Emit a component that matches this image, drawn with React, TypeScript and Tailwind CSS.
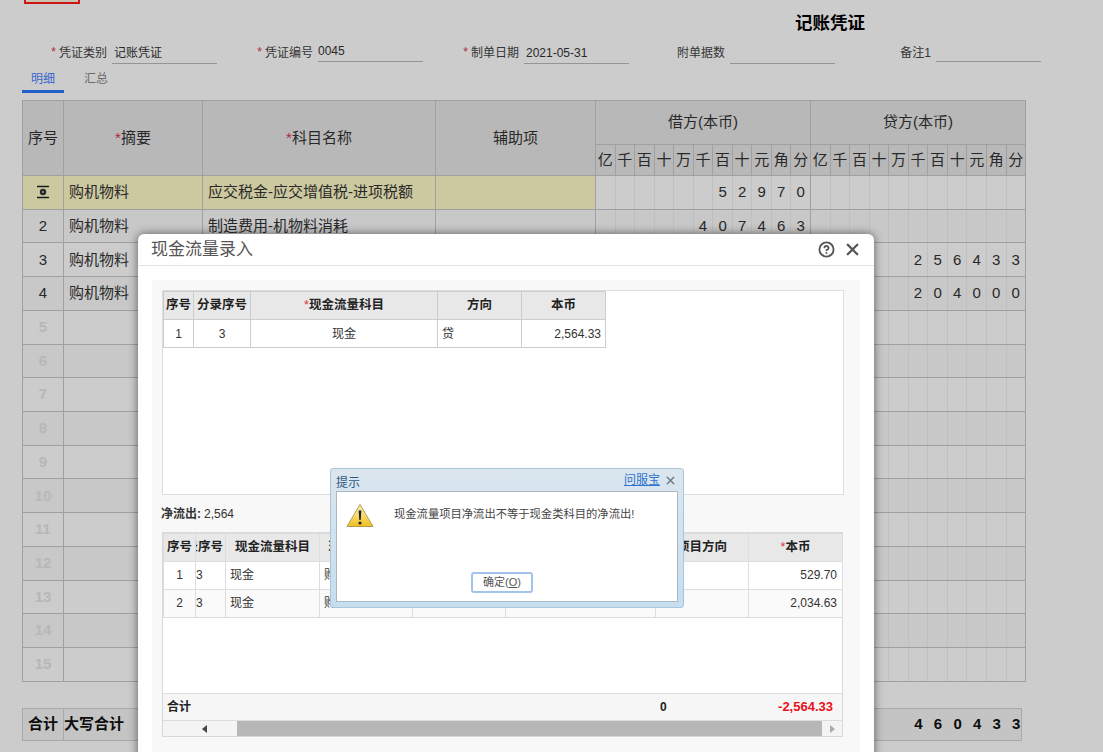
import { CircleHelp, X } from "lucide-react";

const units = ["亿", "千", "百", "十", "万", "千", "百", "十", "元", "角", "分"];

type Row = {
  no: string;
  summary: string;
  subject: string;
  debit: string;
  credit: string;
};

const rows: Row[] = [
  { no: "", summary: "购机物料", subject: "应交税金-应交增值税-进项税额", debit: "      52970", credit: "" },
  { no: "2", summary: "购机物料", subject: "制造费用-机物料消耗", debit: "     407463", credit: "" },
  { no: "3", summary: "购机物料", subject: "", debit: "", credit: "     256433" },
  { no: "4", summary: "购机物料", subject: "", debit: "", credit: "     204000" },
  ...[5, 6, 7, 8, 9, 10, 11, 12, 13, 14, 15].map((n) => ({
    no: String(n),
    summary: "",
    subject: "",
    debit: "",
    credit: "",
  })),
];

const cols = [41, 139, 233, 160];
const digitCols = Array.from({ length: 22 }, () => 19.55);

function DigitCells({ value }: { value: string }) {
  return (
    <>
      {units.map((_, i) => (
        <td
          key={i}
          className={`border-y border-y-[#c8c8c8] text-center text-[15px] text-[#333] ${
            i === 10 ? "border-r border-r-[#c8c8c8]" : "border-r border-r-[#efefef]"
          }`}
        >
          {value[i] && value[i] !== " " ? value[i] : ""}
        </td>
      ))}
    </>
  );
}

function RowMarker() {
  return (
    <svg width="14" height="14" viewBox="0 0 14 14" className="mx-auto">
      <path d="M1 1.5h12M1 12.5h12" stroke="#222" strokeWidth="1.6" />
      <circle cx="7" cy="7" r="3.2" fill="#333" />
      <circle cx="7" cy="7" r="1.1" fill="#bbb" />
    </svg>
  );
}

function VoucherTable() {
  const th = "border border-[#c8c8c8] bg-[#e7e7e7] font-normal text-[15px] text-[#333]";
  return (
    <table className="ml-[22px] w-[1003px] table-fixed border-collapse">
      <colgroup>
        {cols.map((w, i) => (
          <col key={i} style={{ width: w }} />
        ))}
        {digitCols.map((w, i) => (
          <col key={i} style={{ width: w }} />
        ))}
      </colgroup>
      <thead>
        <tr className="h-[44px]">
          <th rowSpan={2} className={th}>序号</th>
          <th rowSpan={2} className={th}>
            <span className="text-[#d8324a]">*</span>摘要
          </th>
          <th rowSpan={2} className={th}>
            <span className="text-[#d8324a]">*</span>科目名称
          </th>
          <th rowSpan={2} className={th}>辅助项</th>
          <th colSpan={11} className={th}>借方(本币)</th>
          <th colSpan={11} className={th}>贷方(本币)</th>
        </tr>
        <tr className="h-[31px]">
          {[...units, ...units].map((u, i) => (
            <th key={i} className={`${th} px-0`}>{u}</th>
          ))}
        </tr>
      </thead>
      <tbody>
        {rows.map((r, i) => {
          const active = i === 0;
          const faded = i > 3;
          const cell = `border border-[#c8c8c8] text-[15px] ${active ? "bg-[#fffbc8]" : ""}`;
          return (
            <tr key={i} className={`h-[33.73px] ${i % 2 === 1 ? "bg-[#fafafa]" : "bg-white"}`}>
              <td className={`${cell} text-center ${faded ? "text-[13px] font-bold text-[#e6e6e6]" : "text-[#333]"}`}>
                {active ? <RowMarker /> : r.no}
              </td>
              <td className={`${cell} whitespace-nowrap pl-[5px] text-[#333]`}>{r.summary}</td>
              <td className={`${cell} whitespace-nowrap pl-[5px] text-[#333]`}>{r.subject}</td>
              <td className={cell} />
              <DigitCells value={r.debit} />
              <DigitCells value={r.credit} />
            </tr>
          );
        })}
      </tbody>
    </table>
  );
}

function TotalBar() {
  const digits = "     460433";
  return (
    <div className="ml-[22px] mt-[26px] flex h-[33px] w-[1000px] border border-[#d4d4d4] bg-[#f6f6f6] text-[15px] font-bold text-[#111]">
      <div className="flex w-[41px] shrink-0 items-center justify-center border-r border-[#d4d4d4]">合计</div>
      <div className="flex flex-1 items-center">大写合计</div>
      <div className="-mr-[5px] flex">
        {units.map((_, i) => (
          <div key={i} className="flex w-[19.55px] items-center justify-center">
            {digits[i] !== " " ? digits[i] : ""}
          </div>
        ))}
      </div>
    </div>
  );
}

function Field({ label, value, required, valuePad = 0, lift = 0 }: {
  label: string;
  value?: string;
  required?: boolean;
  valuePad?: number;
  lift?: number;
}) {
  return (
    <div className="flex items-start justify-end text-[12px] text-[#444]">
      {required && <span className="mr-[3px] text-[#d8324a]">*</span>}
      <span className="mr-[5px] mt-[1px] whitespace-nowrap">{label}</span>
      <div
        className="flex h-[19px] w-[105px] items-center overflow-hidden border-b border-[#bbb] pb-[2px] text-[#333]"
        style={{ marginTop: lift, paddingLeft: valuePad }}
      >
        {value}
      </div>
    </div>
  );
}

function Header() {
  return (
    <>
      <div className="ml-[24px] h-[4px] w-[56px] rounded-b-[1px] border-2 border-t-0 border-[#ff1a1a] bg-[#fdf6e0]" />
      <div className="flex h-[36px] justify-end pr-[238px] pt-[6px] text-[17.5px] font-bold text-black">
        记账凭证
      </div>
      <div className="ml-[11px] mt-[3px] grid h-[27px] grid-cols-[repeat(5,206px)]">
        <Field label="凭证类别" value="记账凭证" required valuePad={2} lift={2} />
        <Field label="凭证编号" value="0045" required />
        <Field label="制单日期" value="2021-05-31" required valuePad={2} lift={2} />
        <Field label="附单据数" lift={2} />
        <Field label="备注1" />
      </div>
      <div className="ml-[22px] flex h-[30px] text-[12px]">
        <div className="flex h-[23px] w-[42px] justify-center border-b-[3px] border-[#2878fa] text-[#4a80ff]">
          明细
        </div>
        <div className="ml-[20px] text-[#888]">汇总</div>
      </div>
    </>
  );
}

function UpperGrid() {
  const th = "border border-[#ccc] bg-[#e8e8e8] text-[12.5px] font-bold text-[#222]";
  const td = "border border-[#ccc] text-[12px] text-[#333]";
  return (
    <div className="ml-[10px] mr-[16px] mt-[10px] h-[205px] border border-[#ddd] bg-white">
      <table className="w-[442px] table-fixed border-collapse">
        <colgroup>
          <col className="w-[30px]" />
          <col className="w-[57px]" />
          <col className="w-[187px]" />
          <col className="w-[84px]" />
          <col className="w-[84px]" />
        </colgroup>
        <thead>
          <tr className="h-[28px]">
            <th className={th}>序号</th>
            <th className={`${th} whitespace-nowrap`}>分录序号</th>
            <th className={th}>
              <span className="font-normal text-[#d8324a]">*</span>现金流量科目
            </th>
            <th className={th}>方向</th>
            <th className={th}>本币</th>
          </tr>
        </thead>
        <tbody>
          <tr className="h-[28px]">
            <td className={`${td} text-center text-[#1f5f4f]`}>1</td>
            <td className={`${td} text-center`}>3</td>
            <td className={`${td} text-center`}>现金</td>
            <td className={`${td} pl-[4px]`}>贷</td>
            <td className={`${td} pr-[4px] text-right`}>2,564.33</td>
          </tr>
        </tbody>
      </table>
    </div>
  );
}

function LowerGrid() {
  const th = "border border-[#ddd] bg-[#e8e8e8] text-[12.5px] font-bold text-[#222] overflow-hidden";
  const td = "border border-[#ddd] pb-[2px] text-[12px] text-[#333]";
  const data = [
    { no: "1", amount: "529.70", bg: "bg-white" },
    { no: "2", amount: "2,034.63", bg: "bg-[#fafafa]" },
  ];
  return (
    <div className="ml-[10px] mr-[17px] mt-[10px] flex h-[205px] flex-col border border-[#d8d8d8] bg-white">
      <table className="w-[679px] table-fixed border-collapse">
        <colgroup>
          <col className="w-[32px]" />
          <col className="w-[30px]" />
          <col className="w-[94px]" />
          <col className="w-[93px]" />
          <col className="w-[93px]" />
          <col className="w-[150px]" />
          <col className="w-[93px]" />
          <col className="w-[94px]" />
        </colgroup>
        <thead>
          <tr className="h-[28px]">
            <th className={th}>序号</th>
            <th className={th}>
              <div className="flex justify-end pr-[2px]">
                <span className="shrink-0 whitespace-nowrap">分录序号</span>
              </div>
            </th>
            <th className={th}>现金流量科目</th>
            <th className={th}>现金流量项目</th>
            <th className={th} />
            <th className={th} />
            <th className={th}>项目方向</th>
            <th className={th}>
              <span className="font-normal text-[#d8324a]">*</span>本币
            </th>
          </tr>
        </thead>
        <tbody>
          {data.map((d) => (
            <tr key={d.no} className={`h-[28px] ${d.bg}`}>
              <td className={`${td} text-center text-[#1f5f4f]`}>{d.no}</td>
              <td className={td}>3</td>
              <td className={`${td} pl-[4px]`}>现金</td>
              <td className={`${td} whitespace-nowrap pl-[4px]`}>购买商品</td>
              <td className={td} />
              <td className={td} />
              <td className={td} />
              <td className={`${td} pr-[5px] text-right`}>{d.amount}</td>
            </tr>
          ))}
        </tbody>
      </table>
      <div className="flex-1" />
      <div className="flex h-[28px] shrink-0 items-center border-y border-[#ddd] bg-[#f6f6f6] text-[12px] font-bold text-[#222]">
        <span className="ml-[4px]">合计</span>
        <span className="ml-[469px]">0</span>
        <span className="ml-auto mr-[9px] text-[13px] text-[#e8101c]">-2,564.33</span>
      </div>
      <div className="flex h-[15px] shrink-0 items-center bg-[#f4f4f4]">
        <div className="flex w-[74px] justify-center pl-[8px]">
          <span className="h-0 w-0 border-y-[4px] border-r-[5px] border-y-transparent border-r-[#444]" />
        </div>
        <div className="h-full w-[585px] bg-[#b7b7b7]" />
        <div className="flex flex-1 justify-center">
          <span className="h-0 w-0 border-y-[4px] border-l-[5px] border-y-transparent border-l-[#aaa]" />
        </div>
      </div>
    </div>
  );
}

function CashFlowModal() {
  return (
    <div className="absolute left-[138px] top-[234px] z-20 h-[530px] w-[736px] rounded-t-[6px] bg-white shadow-[0_0_10px_rgba(0,0,0,0.55)]">
      <div className="flex h-[32px] items-center justify-between border-b border-[#e2e2e2] pl-[13px] pr-[12px] text-[17px] text-[#555]">
        <span>现金流量录入</span>
        <div className="flex items-center gap-[8px]">
          <CircleHelp className="h-[17px] w-[17px] text-[#555]" strokeWidth={2.6} />
          <X className="h-[19px] w-[19px] text-[#555]" strokeWidth={3} />
        </div>
      </div>
      <div className="mx-[14px] mt-[14px] flow-root h-[490px] bg-[#f8f8f8]">
        <UpperGrid />
        <div className="ml-[9px] mt-[10px] flex h-[17px] items-center text-[12px] text-[#333]">
          <span className="font-bold">净流出:</span>
          <span className="ml-[3px]">2,564</span>
        </div>
        <LowerGrid />
      </div>
    </div>
  );
}

function WarnIcon() {
  return (
    <svg width="28" height="25" viewBox="0 0 28 25">
      <defs>
        <linearGradient id="warn" x1="0" y1="0" x2="0" y2="1">
          <stop offset="0" stopColor="#fff6c0" />
          <stop offset="1" stopColor="#f0c020" />
        </linearGradient>
      </defs>
      <path d="M14 1.5 27 23.5H1Z" fill="url(#warn)" stroke="#b09a50" strokeLinejoin="round" />
      <path d="M12.6 7.5h2.8l-.7 9.5h-1.4Z" fill="#222" />
      <circle cx="14" cy="20" r="1.6" fill="#222" />
    </svg>
  );
}

function AlertDialog() {
  return (
    <div className="absolute left-[330px] top-[468px] z-30 flex h-[140px] w-[354px] flex-col rounded-[3px] border border-[#a8c6da] bg-gradient-to-b from-[#dbe6ee] to-[#c6def0] px-[5px] pb-[5px]">
      <div className="flex h-[22px] shrink-0 items-center justify-between text-[12px]">
        <span className="pt-[5px] text-[#2f5a86]">提示</span>
        <div className="flex items-center gap-[4px] pr-[1px]">
          <span className="text-[#2f74cf] underline">问服宝</span>
          <X className="h-[13px] w-[13px] text-[#6c7a86]" strokeWidth={2.6} />
        </div>
      </div>
      <div className="flex flex-1 flex-col border border-[#a9b8c4] bg-white">
        <div className="flex flex-1 items-start pl-[9px] pt-[11px]">
          <WarnIcon />
          <span className="ml-[20px] mt-[3px] whitespace-nowrap text-[11.3px] text-[#444]">
            现金流量项目净流出不等于现金类科目的净流出!
          </span>
        </div>
        <div className="flex justify-center pb-[8px] pr-[10px]">
          <button className="h-[21px] w-[62px] rounded-[3px] border-2 border-[#a3c3ea] bg-white text-[11px] text-[#555]">
            确定(<span className="underline">O</span>)
          </button>
        </div>
      </div>
    </div>
  );
}

export default function App() {
  return (
    <div className="relative h-[752px] w-[1103px] overflow-hidden bg-white font-['Liberation_Sans','Noto_Sans_CJK_SC',sans-serif]">
      <Header />
      <VoucherTable />
      <TotalBar />
      <div className="absolute inset-0 z-10 bg-black/20" />
      <CashFlowModal />
      <AlertDialog />
    </div>
  );
}
